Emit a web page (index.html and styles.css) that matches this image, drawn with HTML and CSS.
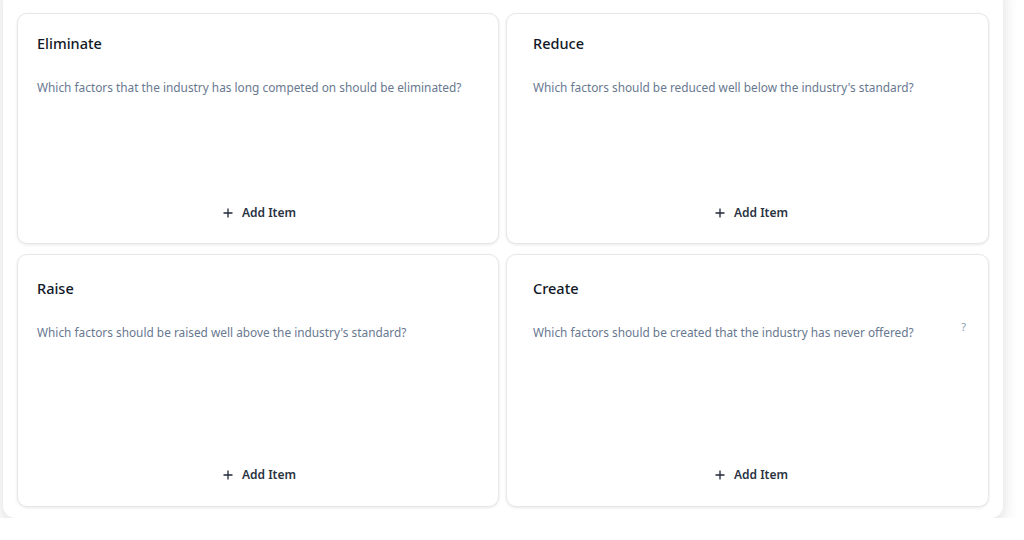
FILE: index.html
```html
<!DOCTYPE html>
<html lang="en">
<head>
<meta charset="utf-8">
<title>ERRC Grid</title>
<link rel="stylesheet" href="styles.css">
</head>
<body>
<div class="panel">
  <div class="grid">
    <section class="card row-top col-left">
      <h3 class="card-title">Eliminate</h3>
      <p class="card-desc">Which factors that the industry has long competed on should be eliminated?</p>
      <div class="card-body"></div>
      <button class="add-btn"><svg class="plus" viewBox="0 0 10 10" width="10" height="10"><path d="M5 0.5V9.5M0.5 5H9.5" stroke="#1f2937" stroke-width="1.3" fill="none"/></svg><span>Add Item</span></button>
    </section>
    <section class="card row-top col-right">
      <h3 class="card-title">Reduce</h3>
      <p class="card-desc">Which factors should be reduced well below the industry's standard?</p>
      <div class="card-body"></div>
      <button class="add-btn"><svg class="plus" viewBox="0 0 10 10" width="10" height="10"><path d="M5 0.5V9.5M0.5 5H9.5" stroke="#1f2937" stroke-width="1.3" fill="none"/></svg><span>Add Item</span></button>
    </section>
    <section class="card row-bottom col-left">
      <h3 class="card-title">Raise</h3>
      <p class="card-desc">Which factors should be raised well above the industry's standard?</p>
      <div class="card-body"></div>
      <button class="add-btn"><svg class="plus" viewBox="0 0 10 10" width="10" height="10"><path d="M5 0.5V9.5M0.5 5H9.5" stroke="#1f2937" stroke-width="1.3" fill="none"/></svg><span>Add Item</span></button>
    </section>
    <section class="card row-bottom col-right">
      <h3 class="card-title">Create</h3>
      <div class="desc-row">
        <p class="card-desc">Which factors should be created that the industry has never offered?</p>
        <span class="help">?</span>
      </div>
      <div class="card-body"></div>
      <button class="add-btn"><svg class="plus" viewBox="0 0 10 10" width="10" height="10"><path d="M5 0.5V9.5M0.5 5H9.5" stroke="#1f2937" stroke-width="1.3" fill="none"/></svg><span>Add Item</span></button>
    </section>
  </div>
</div>
</body>
</html>
```

FILE: styles.css
```css
* { box-sizing: border-box; }
html, body {
  margin: 0;
  padding: 0;
  background: #ffffff;
  font-family: "Noto Sans", "Open Sans", Arial, sans-serif;
}
.panel {
  margin: -20px 0 0 3px;
  width: 1000px;
  height: 538px;
  background: #ffffff;
  border-radius: 12px;
  box-shadow: 0 6px 16px rgba(0, 0, 0, 0.14);
  padding: 33px 14px 11px 14px;
}
.grid {
  display: grid;
  grid-template-columns: 482px 483px;
  grid-template-rows: 231px 253px;
  column-gap: 7px;
  row-gap: 10px;
}
.card {
  display: flex;
  flex-direction: column;
  background: #ffffff;
  border: 1px solid #e6e7ea;
  border-radius: 10px;
  box-shadow: 0 1px 3px rgba(0, 0, 0, 0.09);
  padding: 18px 20px 20px 19px;
}
.col-right { padding-left: 26px; padding-right: 22px; }
.row-bottom { padding-top: 22px; padding-bottom: 21px; }
.card-title {
  margin: 0;
  font-size: 14.5px;
  line-height: 22px;
  font-weight: 500;
  color: #111827;
}
.card-desc {
  margin: 24px 0 0 0;
  font-size: 11.85px;
  line-height: 18px;
  color: #687890;
}
.desc-row {
  display: flex;
  justify-content: space-between;
  align-items: flex-start;
}
.help {
  margin-top: 19px;
  font-size: 11px;
  line-height: 18px;
  color: #8a9ab0;
}
.card-body { flex: 1; }
.add-btn {
  align-self: center;
  display: flex;
  align-items: center;
  gap: 9px;
  border: 0;
  background: transparent;
  padding: 0 0 0 4px;
  font-family: inherit;
  font-size: 12px;
  line-height: 20px;
  font-weight: 600;
  color: #2a3342;
}
.plus { display: block; }
```
